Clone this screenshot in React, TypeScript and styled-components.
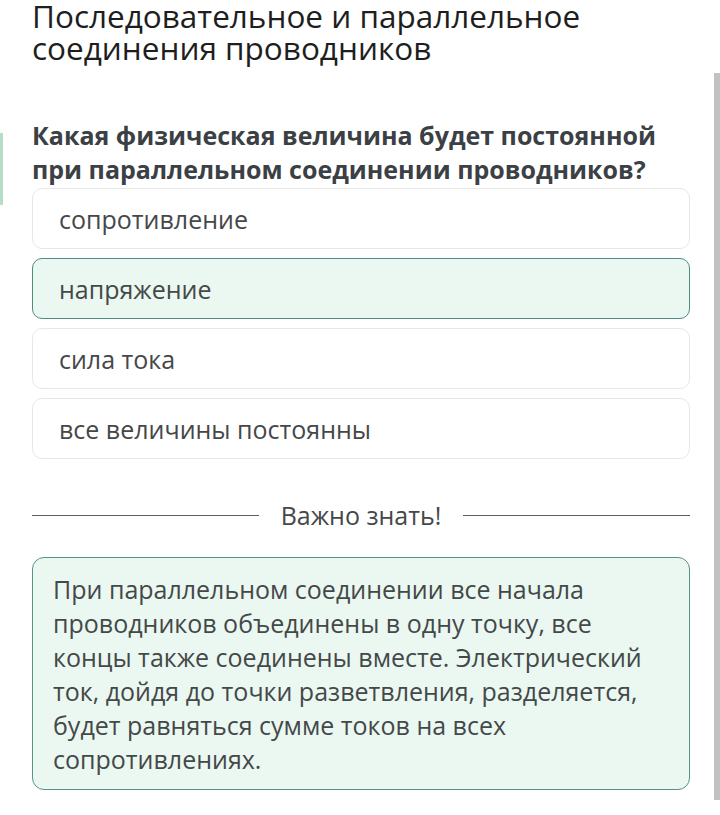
import React from "react";
import styled, { createGlobalStyle } from "styled-components";

const Global = createGlobalStyle`
  html, body { margin: 0; padding: 0; background: #ffffff; }
  body { font-family: "Open Sans", "Noto Sans", sans-serif; }
  * { box-sizing: border-box; }
`;

const Page = styled.div`
  position: relative;
  width: 720px;
  height: 815px;
  overflow: hidden;
  background: #ffffff;
  padding: 0 30px 0 32px;
`;

const Title = styled.h1`
  margin: 0;
  padding-top: 0;
  font-size: 31.5px;
  line-height: 32px;
  font-weight: 400;
  color: #1e1e1e;
`;

const Question = styled.h2`
  margin: 54px 0 0 0;
  font-size: 25px;
  line-height: 34px;
  font-weight: 700;
  color: #3b4045;
`;

const Options = styled.div`
  display: flex;
  flex-direction: column;
  gap: 9px;
  margin-top: 2px;
`;

const Option = styled.div<{ $selected?: boolean }>`
  height: 61px;
  display: flex;
  align-items: center;
  padding: 0 26px;
  border-radius: 10px;
  border: 1px solid ${(p) => (p.$selected ? "#4d8c82" : "#e6e8e8")};
  background: ${(p) => (p.$selected ? "#eaf8f1" : "#ffffff")};
  font-size: 25px;
  color: #454849;
`;

const Divider = styled.div`
  display: flex;
  align-items: center;
  gap: 22px;
  margin-top: 41px;
  font-size: 25px;
  color: #454849;
  line-height: 30px;

  &::before,
  &::after {
    content: "";
    flex: 1;
    height: 1px;
    background: #5a5f60;
  }
`;

const InfoBox = styled.div`
  margin-top: 27px;
  border: 1px solid #55938a;
  border-radius: 12px;
  background: #eaf8f1;
  padding: 14px 18px 13px 20px;
  font-size: 25px;
  line-height: 34px;
  color: #454849;
`;

const Scrollbar = styled.div`
  position: absolute;
  right: 0;
  top: 73px;
  width: 6px;
  height: 727px;
  background: #c2c2c2;
`;

const SideMark = styled.div`
  position: absolute;
  left: 0;
  top: 133px;
  width: 3px;
  height: 72px;
  background: #b7ddc9;
`;

export default function App() {
  return (
    <>
      <Global />
      <Page>
        <Title>
          Последовательное и параллельное
          <br />
          соединения проводников
        </Title>
        <Question>
          Какая физическая величина будет постоянной при параллельном соединении проводников?
        </Question>
        <Options>
          <Option>сопротивление</Option>
          <Option $selected>напряжение</Option>
          <Option>сила тока</Option>
          <Option>все величины постоянны</Option>
        </Options>
        <Divider>Важно знать!</Divider>
        <InfoBox>
          При параллельном соединении все начала проводников объединены в одну точку, все концы также соединены вместе. Электрический ток, дойдя до точки разветвления, разделяется, будет равняться сумме токов на всех сопротивлениях.
        </InfoBox>
        <SideMark />
        <Scrollbar />
      </Page>
    </>
  );
}
